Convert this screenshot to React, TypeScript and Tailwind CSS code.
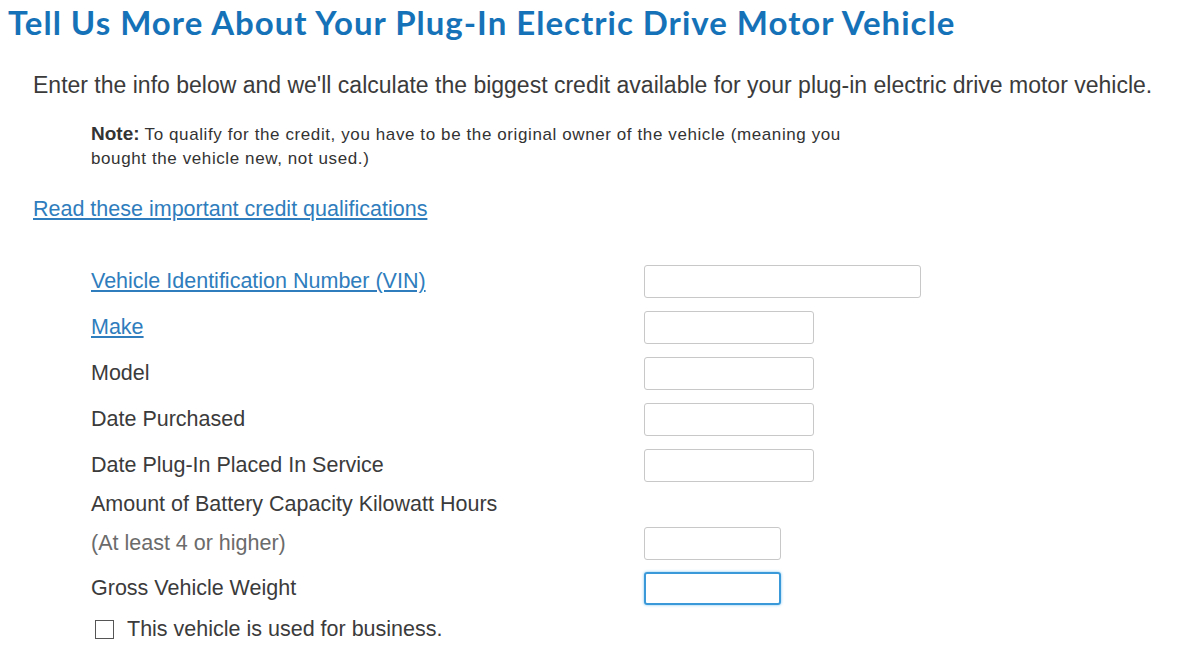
import { useState } from 'react';

type Row = {
  label: string;
  link?: boolean;
  input: 'wide' | 'mid';
};

const rows: Row[] = [
  { label: 'Vehicle Identification Number (VIN)', link: true, input: 'wide' },
  { label: 'Make', link: true, input: 'mid' },
  { label: 'Model', input: 'mid' },
  { label: 'Date Purchased', input: 'mid' },
  { label: 'Date Plug-In Placed In Service', input: 'mid' },
];

function Field({ size, focus }: { size: 'wide' | 'mid' | 'short'; focus?: boolean }) {
  const w = size === 'wide' ? 'w-[277px]' : size === 'mid' ? 'w-[170px]' : 'w-[137px]';
  return (
    <input
      type="text"
      autoFocus={focus}
      className={`${w} h-[33px] rounded-[3px] px-2 text-[17px] outline-none ${
        focus
          ? 'border-2 border-[#3a9ad9] shadow-[0_0_3px_#7cc4f0]'
          : 'border border-[#c8c8c8]'
      }`}
    />
  );
}

export default function App() {
  const [business, setBusiness] = useState(false);

  return (
    <div className="w-[1189px] h-[666px] bg-white overflow-hidden text-[#3b3b3b] font-['Liberation_Sans',Arial,sans-serif]">
      <h1 className="pl-[8px] pt-[2px] text-[33px] leading-[40px] font-bold text-[#1672b8] font-['Lato','Liberation_Sans',sans-serif] tracking-[1px]">
        Tell Us More About Your Plug-In Electric Drive Motor Vehicle
      </h1>

      <p className="pl-[33px] mt-[29px] text-[23px] leading-[28px]">
        Enter the info below and we'll calculate the biggest credit available for your plug-in electric drive motor vehicle.
      </p>

      <p className="pl-[91px] mt-[23px] text-[17px] leading-[24px] tracking-[0.6px] text-[#333]">
        <span className="font-bold text-[19px] tracking-normal">Note:</span> To qualify for the credit, you have to be the original owner of the vehicle (meaning you
        <br />
        bought the vehicle new, not used.)
      </p>

      <div className="pl-[33px] mt-[24px]">
        <a href="#" className="text-[21.5px] leading-[28px] text-[#2f7dbd] underline">
          Read these important credit qualifications
        </a>
      </div>

      <div className="mt-[35px] pl-[91px] text-[21.5px]">
        {rows.map((r) => (
          <div key={r.label} className="flex items-center h-[46px]">
            <div className="w-[553px]">
              {r.link ? (
                <a href="#" className="text-[#2f7dbd] underline">
                  {r.label}
                </a>
              ) : (
                <span>{r.label}</span>
              )}
            </div>
            <Field size={r.input} />
          </div>
        ))}

        <div className="flex items-center h-[33px]">Amount of Battery Capacity Kilowatt Hours</div>
        <div className="flex items-center h-[45px]">
          <div className="w-[553px] text-[#6b6b6b]">(At least 4 or higher)</div>
          <Field size="short" />
        </div>
        <div className="flex items-center h-[45px]">
          <div className="w-[553px]">Gross Vehicle Weight</div>
          <Field size="short" focus />
        </div>
        <label className="flex items-center gap-[13px] h-[36px] pl-[4px]">
          <input
            type="checkbox"
            checked={business}
            onChange={(e) => setBusiness(e.target.checked)}
            className="appearance-none w-[19px] h-[19px] border border-[#555] bg-white"
          />
          This vehicle is used for business.
        </label>
      </div>
    </div>
  );
}
